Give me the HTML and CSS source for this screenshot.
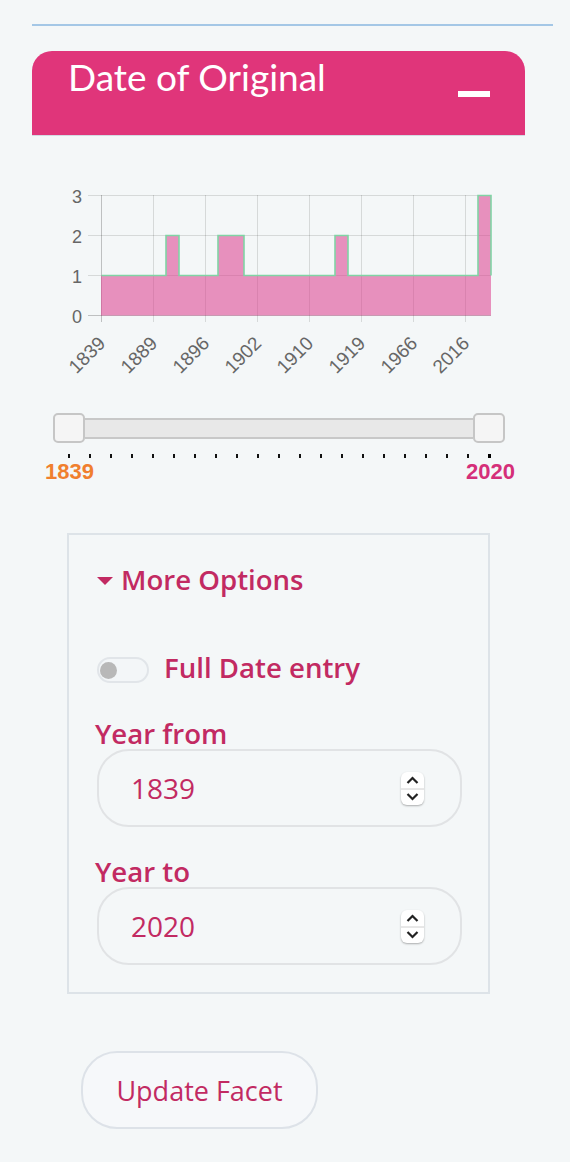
FILE: index.html
```html
<!DOCTYPE html>
<html lang="en">
<head>
    <meta charset="UTF-8">
    <meta name="viewport" content="width=device-width, initial-scale=1.0">
    <title>Date of Original</title>
    <link rel="stylesheet" href="styles.css">
</head>
<body>

    <div class="sidebar">
        <div class="rule"></div>

        <div class="facet-head">
            <h2 class="facet-title">Date of Original</h2>
            <span class="collapse"></span>
        </div>

        <!-- histogramme des dates -->
        <svg class="chart" width="480" height="210" viewBox="40 180 480 210">
            <g stroke="rgba(0,0,0,0.12)" stroke-width="1">
                <line x1="88" y1="195.5" x2="491" y2="195.5"/>
                <line x1="88" y1="235.5" x2="491" y2="235.5"/>
                <line x1="88" y1="275.5" x2="491" y2="275.5"/>
                <line x1="153.5" y1="195" x2="153.5" y2="322"/>
                <line x1="205.5" y1="195" x2="205.5" y2="322"/>
                <line x1="257.5" y1="195" x2="257.5" y2="322"/>
                <line x1="309.5" y1="195" x2="309.5" y2="322"/>
                <line x1="361.5" y1="195" x2="361.5" y2="322"/>
                <line x1="413.5" y1="195" x2="413.5" y2="322"/>
                <line x1="465.5" y1="195" x2="465.5" y2="322"/>
            </g>
            <g stroke="rgba(0,0,0,0.22)" stroke-width="1">
                <line x1="88" y1="315.5" x2="491" y2="315.5"/>
                <line x1="101.5" y1="195" x2="101.5" y2="322"/>
            </g>
            <path d="M101 315.5 V275.5 H166 V235.5 H179 V275.5 H218 V235.5 H244 V275.5 H335 V235.5 H348 V275.5 H478 V195.5 H491 V315.5 Z" fill="rgba(220,60,140,0.55)"/>
            <path d="M101.5 275.5 H166 V235.5 H179 V275.5 H218 V235.5 H244 V275.5 H335 V235.5 H348 V275.5 H478 V195.5 H491 V275.5" fill="none" stroke="#80d4a5" stroke-width="1.6"/>
            <g class="axis-y" font-size="18" fill="#666" text-anchor="end">
                <text x="82" y="202.5">3</text>
                <text x="82" y="242.5">2</text>
                <text x="82" y="282.5">1</text>
                <text x="82" y="322.5">0</text>
            </g>
            <g class="axis-x" font-size="19" fill="#666" text-anchor="end">
                <text x="106.5" y="344.5" transform="rotate(-45 106.5 344.5)">1839</text>
                <text x="158.5" y="344.5" transform="rotate(-45 158.5 344.5)">1889</text>
                <text x="210.5" y="344.5" transform="rotate(-45 210.5 344.5)">1896</text>
                <text x="262.5" y="344.5" transform="rotate(-45 262.5 344.5)">1902</text>
                <text x="314.5" y="344.5" transform="rotate(-45 314.5 344.5)">1910</text>
                <text x="366.5" y="344.5" transform="rotate(-45 366.5 344.5)">1919</text>
                <text x="418.5" y="344.5" transform="rotate(-45 418.5 344.5)">1966</text>
                <text x="470.5" y="344.5" transform="rotate(-45 470.5 344.5)">2016</text>
            </g>
        </svg>

        <div class="slider">
            <span class="handle"></span>
            <span class="track"></span>
            <span class="handle"></span>
        </div>
        <div class="ticks">
            <span></span><span></span><span></span><span></span><span></span><span></span><span></span>
            <span></span><span></span><span></span><span></span><span></span><span></span><span></span>
            <span></span><span></span><span></span><span></span><span></span><span></span><span class="end"></span>
        </div>
        <div class="range-labels">
            <span class="from">1839</span>
            <span class="to">2020</span>
        </div>

        <div class="options">
            <div class="options-toggle"><span class="caret"></span>More Options</div>

            <div class="switch-row">
                <span class="switch"><span class="knob"></span></span>
                Full Date entry
            </div>

            <label class="field-label">Year from</label>
            <div class="year-input">
                <span>1839</span>
                <span class="spinner">
                    <svg width="23" height="33" viewBox="0 0 23 33">
                        <line x1="0" y1="17" x2="23" y2="17" stroke="#d0d0d0" stroke-width="1"/>
                        <path d="M6.5 11 L11.5 6 L16.5 11" fill="none" stroke="#222" stroke-width="2.2"/>
                        <path d="M6.5 22 L11.5 27 L16.5 22" fill="none" stroke="#222" stroke-width="2.2"/>
                    </svg>
                </span>
            </div>

            <label class="field-label field-label-to">Year to</label>
            <div class="year-input">
                <span>2020</span>
                <span class="spinner">
                    <svg width="23" height="33" viewBox="0 0 23 33">
                        <line x1="0" y1="17" x2="23" y2="17" stroke="#d0d0d0" stroke-width="1"/>
                        <path d="M6.5 11 L11.5 6 L16.5 11" fill="none" stroke="#222" stroke-width="2.2"/>
                        <path d="M6.5 22 L11.5 27 L16.5 22" fill="none" stroke="#222" stroke-width="2.2"/>
                    </svg>
                </span>
            </div>
        </div>

        <button class="update">Update Facet</button>
    </div>

</body>
</html>
```

FILE: styles.css
```css
*{
    padding: 0;
    margin: 0;
    box-sizing: border-box;
}

body{
    background-color: #f4f7f8;
    font-family: "Open Sans", sans-serif;
    color: #c22a62;
}

.sidebar{
    width: 570px;
    padding-top: 24px;
    padding-bottom: 20px;
}

.rule{
    height: 2px;
    margin: 0 17px 0 32px;
    background-color: #a4c7e6;
}

.facet-head{
    margin: 25px 0 0 32px;
    width: 493px;
    height: 85px;
    padding: 7px 35px 0 36px;
    background-color: #e0357a;
    border-radius: 20px 20px 0 0;
    border-bottom: 1px solid #d3dae2;
    display: flex;
    justify-content: space-between;
    align-items: flex-start;
}

.facet-title{
    font-family: Lato, "Open Sans", sans-serif;
    font-weight: 400;
    font-size: 37px;
    line-height: 37px;
    color: white;
}

.collapse{
    width: 32px;
    height: 6px;
    margin-top: 33px;
    background-color: white;
}

.chart{
    display: block;
    margin: 44px 0 0 40px;
    font-family: "Liberation Sans", Arial, sans-serif;
}

/* curseur double */
.slider{
    margin: 23px 0 0 53px;
    width: 452px;
    height: 30px;
    display: flex;
    align-items: center;
}

.handle{
    flex: none;
    width: 32px;
    height: 30px;
    border: 2px solid #c6c6c6;
    border-radius: 5px;
    background-color: #f5f5f5;
}

.track{
    flex: 1;
    height: 21px;
    background-color: #e8e8e8;
    border-top: 2px solid #c8c8c8;
    border-bottom: 2px solid #c8c8c8;
}

.ticks{
    margin: 11px 0 0 68px;
    height: 4px;
    display: flex;
    gap: 19px;
}

.ticks span{
    width: 2px;
    height: 4px;
    background-color: #111;
}

.ticks span.end{
    width: 3px;
    background-color: #000;
}

.range-labels{
    margin: 3px 0 0 45px;
    width: 470px;
    display: flex;
    justify-content: space-between;
    font-family: "Liberation Sans", Arial, sans-serif;
    font-weight: 700;
    font-size: 22px;
    line-height: 22px;
}

.range-labels .from{
    color: #f07f2e;
}

.range-labels .to{
    color: #d52f79;
}

/* bloc options */
.options{
    margin: 50px 0 0 67px;
    width: 423px;
    border: 2px solid #dde3e8;
    padding: 28px 26px 27px 28px;
}

.options-toggle,
.switch-row,
.field-label{
    font-weight: 600;
    font-size: 27.6px;
    line-height: 32px;
}

.options-toggle{
    display: flex;
    align-items: flex-start;
}

.caret{
    width: 0;
    height: 0;
    margin: 14px 8px 0 0;
    border-left: 8px solid transparent;
    border-right: 8px solid transparent;
    border-top: 8px solid #c22a62;
}

.switch-row{
    margin-top: 56px;
    display: flex;
    align-items: flex-start;
}

.switch{
    width: 52px;
    height: 26px;
    margin: 6px 15px 0 0;
    padding-left: 1px;
    border: 2px solid #e1e5e9;
    border-radius: 13px;
    background-color: #f3f6f8;
    display: flex;
    align-items: center;
}

.knob{
    width: 17px;
    height: 17px;
    border-radius: 50%;
    background-color: #b8b8b8;
}

.field-label{
    display: block;
    margin: 34px 0 0 -2px;
}

.field-label-to{
    margin-top: 28px;
}

.year-input{
    height: 78px;
    border: 2px solid #e1e3e5;
    border-radius: 32px;
    padding: 0 36px 0 32px;
    display: flex;
    align-items: center;
    justify-content: space-between;
    font-size: 28px;
    line-height: 1;
}

.spinner{
    width: 23px;
    height: 33px;
    border-radius: 6px;
    background-color: white;
    box-shadow: 0 1px 2px rgba(0, 0, 0, 0.3);
}

.spinner svg{
    display: block;
}

.update{
    display: block;
    margin: 57px 0 0 81px;
    width: 237px;
    height: 78px;
    border: 2px solid #dde2e8;
    border-radius: 36px;
    background-color: #f6f8fa;
    color: #c22a62;
    font-family: "Open Sans", sans-serif;
    font-size: 27px;
}
```
